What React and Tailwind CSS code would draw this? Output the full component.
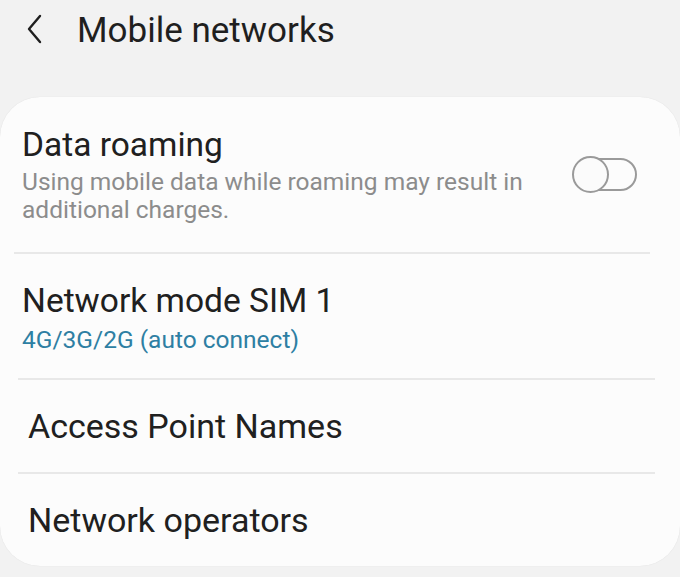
function Toggle() {
  return (
    <div className="relative h-[37px] w-[66px]">
      <div className="absolute left-[3px] top-[2px] h-[33px] w-[62px] rounded-full border-[2.5px] border-[#9a9a9a]" />
      <div className="absolute left-0 top-0 h-[37px] w-[37px] rounded-full border-[2.5px] border-[#9a9a9a] bg-[#fbfbfb]" />
    </div>
  )
}

function Divider({ className }) {
  return <div className={`h-[2px] bg-[#e8e8e8] ${className}`} />
}

export default function App() {
  return (
    <div
      className="h-[577px] w-[680px] overflow-hidden bg-[#f2f2f2]"
      style={{ fontFamily: 'Roboto, "Noto Sans", sans-serif' }}
    >
      <div className="flex h-[60px] items-center pl-[24px] pt-[1px]">
        <svg width="22" height="32" viewBox="0 0 22 32" className="mt-[-3px]">
          <path d="M16 3 L5 16 L16 29" fill="none" stroke="#1f1f1f" strokeWidth="2.4" strokeLinecap="round" strokeLinejoin="round" />
        </svg>
        <h1 className="ml-[31px] text-[35px] leading-none text-[#1f1f1f]">Mobile networks</h1>
      </div>

      <div className="mt-[37px] h-[469px] rounded-[40px] bg-[#fcfcfc] shadow-[0_0_1px_rgba(0,0,0,0.12)]">
        <div className="flex items-center pl-[22px] pr-[42px] pt-[28px] pb-[28px]">
          <div className="flex-1">
            <div className="text-[33.5px] leading-[40px] text-[#202020]">Data roaming</div>
            <div className="mt-[3px] w-[530px] text-[24.5px] leading-[28px] text-[#8c8c8c]">
              Using mobile data while roaming may result in additional charges.
            </div>
          </div>
          <Toggle />
        </div>
        <Divider className="ml-[14px] mr-[30px]" />

        <div className="pl-[22px] pt-[27px] pb-[23px]">
          <div className="text-[33.5px] leading-[40px] text-[#202020]">Network mode SIM 1</div>
          <div className="mt-[3px] text-[24.5px] leading-[31px] text-[#2e7fa3]">4G/3G/2G (auto connect)</div>
        </div>
        <Divider className="ml-[18px] mr-[25px]" />

        <div className="flex h-[92px] items-center pl-[28px]">
          <div className="text-[34px] leading-[40px] text-[#202020]">Access Point Names</div>
        </div>
        <Divider className="ml-[18px] mr-[25px]" />

        <div className="flex h-[91px] items-center pl-[28px]">
          <div className="text-[34px] leading-[40px] text-[#202020]">Network operators</div>
        </div>
      </div>
    </div>
  )
}
